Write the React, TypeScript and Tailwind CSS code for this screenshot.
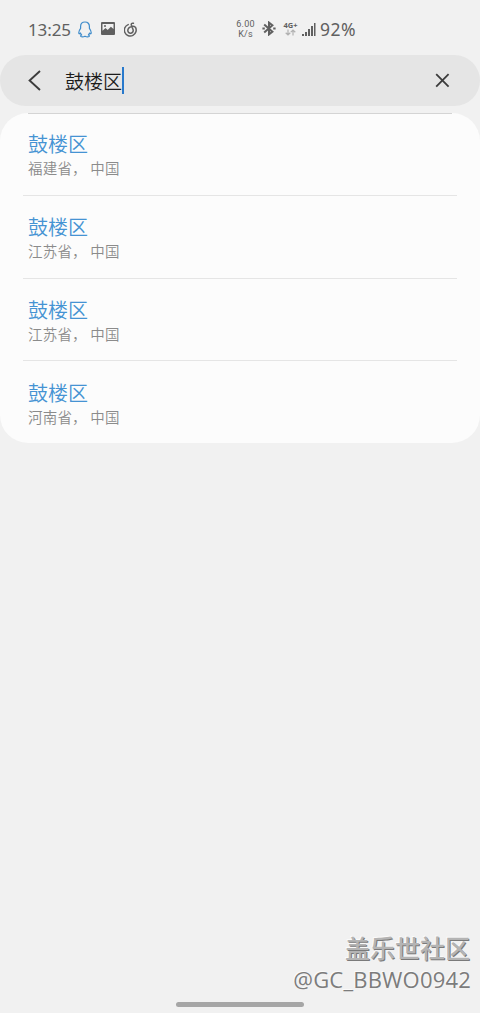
import { useState } from 'react'

const results = [
    { id: 1, name: '鼓楼区', region: '福建省， 中国' },
    { id: 2, name: '鼓楼区', region: '江苏省， 中国' },
    { id: 3, name: '鼓楼区', region: '江苏省， 中国' },
    { id: 4, name: '鼓楼区', region: '河南省， 中国' },
]

function StatusBar() {
    return (
        <div className="flex h-[55px] items-center pt-[3px] pl-[28px] text-[#606060] font-['Noto_Sans',sans-serif]">
            <span className="w-[50px] shrink-0 text-[17px] leading-none tracking-[-0.1px]">13:25</span>

            {/* QQ */}
            <svg className="h-[17px] w-[14px] shrink-0" viewBox="0 0 14 17" fill="none" stroke="#3f8ccb" strokeWidth="1.2" strokeLinejoin="round">
                <path d="M7 1C4.2 1 2.6 3 2.6 5.4v1.9C1.3 9 .6 11 .9 12.4c.2.8 1 .3 1.5-.4.2.9.7 1.5 1.2 2-.7.3-1.1.7-1 1.1.2.9 2.9.9 4.4.1 1.5.8 4.2.8 4.4-.1.1-.4-.3-.8-1-1.1.5-.5 1-1.1 1.2-2 .5.7 1.3 1.2 1.5.4.3-1.4-.4-3.4-1.7-5.1V5.4C11.4 3 9.8 1 7 1Z" />
            </svg>

            {/* Picture */}
            <svg className="ml-[9px] -mt-px h-[13px] w-[14px] shrink-0" viewBox="0 0 14 13">
                <rect width="14" height="13" rx="1" fill="#606060" />
                <path d="M1.5 8.8 4.5 6l2.2 2 3.2-3.3 2.6 2.4V2H1.5Z" fill="#f1f1f1" />
                <circle cx="4" cy="3.9" r="1" fill="#606060" />
            </svg>

            {/* NetEase music */}
            <svg className="ml-[9px] h-[15px] w-[14px] shrink-0" viewBox="0 0 14 15" fill="none" stroke="#606060" strokeWidth="1.5" strokeLinecap="round">
                <path d="M4.2 2.6A5.9 5.9 0 1 0 11.4 5.2C10.4 4.3 9 4.1 7.8 4.4 5.6 5 3.8 6.4 3.8 8.6a2.7 2.7 0 1 0 5.3-.8L7.4 3.2c-.5-1.5.4-2.4 2-1.9" />
            </svg>

            <div className="ml-[97px] flex w-[21px] shrink-0 flex-col items-center text-[9px] leading-[9px] tracking-[0.2px] font-['Roboto',sans-serif]">
                <span>6.00</span>
                <span className="mt-[2px] leading-[7px]">K/s</span>
            </div>

            {/* Bluetooth */}
            <svg className="ml-[6px] -mt-px h-[15px] w-[14px] shrink-0" viewBox="0 0 14 15" fill="none" stroke="#606060" strokeWidth="2">
                <path d="m2.2 3.4 8.2 7.4L7 13.4V1.6l3.4 2.6-8.2 7.4" />
                <path d="M.4 7.5h2.4M11.2 7.5h2.4" />
            </svg>

            <div className="ml-[7px] -mt-px flex w-[15px] shrink-0 flex-col items-center">
                <span className="text-[7.5px] leading-[8px] font-bold">4G+</span>
                <svg className="h-[7px] w-[11px]" viewBox="0 0 11 7" fill="none" stroke="#b2b2b2" strokeWidth="1.2">
                    <path d="M3 .5v5.5M.7 3.8 3 6l2.3-2.2M8 6.5V1M5.8 3.2 8 1l2.3 2.2" />
                </svg>
            </div>

            {/* Signal */}
            <svg className="ml-[4px] h-[13px] w-[14px] shrink-0" viewBox="0 0 14 13" fill="#606060">
                <path d="M0 11h2v2H0zM3 9h2v4H3zM6 6h2v7H6zM9 3h2v10H9zM12 0h1.5v13H12z" />
            </svg>

            <span className="mt-px ml-[4px] text-[17.5px] leading-none tracking-[0.5px]">92%</span>
        </div>
    )
}

export default function App() {
    const [query, setQuery] = useState('鼓楼区')

    return (
        <div className="relative flex h-[1013px] w-[480px] flex-col overflow-hidden bg-[#f1f1f1] font-['Noto_Sans_CJK_SC',sans-serif]">
            <StatusBar />

            {/* Search field */}
            <div className="flex h-[51px] shrink-0 items-center rounded-[26px] bg-[#e5e5e5] pr-[30px] pl-[28px]">
                <button className="shrink-0">
                    <svg className="h-[21px] w-[13px]" viewBox="0 0 13 21" fill="none" stroke="#3c3c3c" strokeWidth="1.9">
                        <path d="M12 1 1.6 10.5 12 20" />
                    </svg>
                </button>
                <div className="ml-[24px] flex flex-1 items-center">
                    <span className="text-[19px] leading-[26px] font-[350] text-[#1c1c1c]">{query}</span>
                    <span className="h-[27px] w-[2px] bg-[#2879cc]" />
                </div>
                <button className="shrink-0" onClick={() => setQuery('')}>
                    <svg className="h-[15px] w-[15px]" viewBox="0 0 15 15" fill="none" stroke="#3c3c3c" strokeWidth="1.8">
                        <path d="m1.2 1.2 12.4 12.4M13.6 1.2 1.2 13.6" />
                    </svg>
                </button>
            </div>

            {/* Results */}
            <div className="mt-[7px] shrink-0 rounded-[28px] bg-[#fcfcfc] px-[23px]">
                <div className="mx-[5px] -mb-px h-px bg-[#d4d4d4]" />
                <div className="grid grid-rows-[83px_83px_82px_82px]">
                    {results.map((item) => (
                        <div key={item.id} className="border-b border-[#e5e5e5] pt-[17px] pl-[5px] last:border-b-0 last:pt-[18px]">
                            <div className="text-[20px] leading-[28px] font-[350] text-[#4593d3]">{item.name}</div>
                            <div className="-mt-px text-[14.5px] leading-[21px] font-[350] tracking-[0.2px] text-[#8b8b8b]">{item.region}</div>
                        </div>
                    ))}
                </div>
            </div>

            {/* Watermark */}
            <div className="absolute right-[10px] bottom-[18px] text-right">
                <div className="text-[25px] leading-[33px] font-medium text-[#b4b4b4] [text-shadow:1px_1px_0_#7a7a7a,-1px_-1px_0_#fafafa]">盖乐世社区</div>
                <div className="-mr-px text-[22px] leading-[31px] tracking-[0.2px] text-[#7c7c7c] [text-shadow:-1px_-1px_0_#fafafa] font-['Open_Sans',sans-serif]">@GC_BBWO0942</div>
            </div>

            {/* Home handle */}
            <div className="absolute bottom-[6px] left-[176px] h-[5px] w-[128px] rounded-full bg-[#a6a6a6]" />
        </div>
    )
}
